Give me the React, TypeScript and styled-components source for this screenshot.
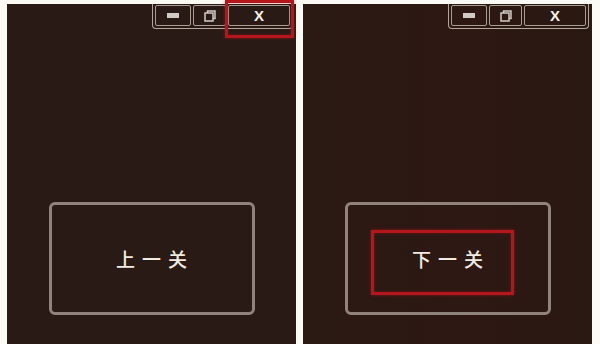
import React from "react";
import styled, { createGlobalStyle } from "styled-components";

const Global = createGlobalStyle`
  html, body { margin: 0; padding: 0; background: #fbfaf5; }
  body { font-family: "Noto Sans", "Noto Sans CJK SC", sans-serif; }
`;

const Page = styled.div`
  width: 600px;
  height: 344px;
  display: flex;
  gap: 7px;
  padding: 4px 8px 0 7px;
  box-sizing: border-box;
  overflow: hidden;
`;

const Panel = styled.div<{ $bg: string }>`
  position: relative;
  flex: 1;
  height: 340px;
  background: ${(p) => p.$bg};
  display: flex;
  flex-direction: column;
  align-items: center;
`;

const TitleRow = styled.div`
  align-self: stretch;
  display: flex;
  justify-content: flex-end;
  padding-right: 3px;
`;

const Frame = styled.div`
  position: relative;
  display: flex;
  gap: 2px;
  padding: 1px 2px 2px 2px;
  border: 1px solid #b3a79c;
  border-top: none;
  border-radius: 0 0 4px 4px;
  height: 21px;
`;

const WinBtn = styled.div<{ $w: number }>`
  width: ${(p) => p.$w}px;
  height: 19px;
  border: 1px solid #a89c92;
  border-radius: 2px;
  display: flex;
  align-items: center;
  justify-content: center;
  box-sizing: content-box;
`;

const MinBar = styled.div`
  width: 12px;
  height: 5px;
  background: #d2cbc5;
`;

const CloseX = styled.span`
  font-family: "Liberation Sans", Arial, sans-serif;
  font-weight: bold;
  font-size: 15px;
  color: #f4f0ea;
  line-height: 1;
`;

const Highlight = styled.div<{ $inset: string }>`
  position: absolute;
  inset: ${(p) => p.$inset};
  border: 3px solid #b3161b;
  box-shadow: 0 0 3px rgba(200, 20, 30, 0.6), inset 0 0 3px rgba(200, 20, 30, 0.5);
  pointer-events: none;
`;

const Spacer = styled.div`
  flex: 1;
`;

const BigButton = styled.div`
  position: relative;
  width: 200px;
  height: 107px;
  margin-bottom: 29px;
  border: 3px solid #8f837c;
  border-radius: 6px;
  display: flex;
  align-items: center;
  justify-content: center;
`;

const Label = styled.span`
  position: relative;
  font-family: "Noto Sans CJK SC", "Noto Sans", sans-serif;
  font-size: 19px;
  font-weight: 500;
  color: #f1ebe1;
  letter-spacing: 7px;
  margin-right: -7px;
`;

const RedBox = styled.div`
  position: absolute;
  left: 23px;
  top: 25px;
  width: 137px;
  height: 59px;
  border: 3px solid #b3161b;
  box-shadow: 0 0 3px rgba(200, 20, 30, 0.6), inset 0 0 3px rgba(200, 20, 30, 0.5);
`;

const RestoreIcon = () => (
  <svg width="12" height="12" viewBox="0 0 12 12" fill="none" stroke="#d2cbc5" strokeWidth="1.5">
    <rect x="1" y="3" width="8" height="8" />
    <path d="M3.5 3 V1 H11 V8.5 H9" />
  </svg>
);

const TitleBar: React.FC<{ highlight?: boolean }> = ({ highlight }) => (
  <TitleRow>
    <Frame>
      <WinBtn $w={34}>
        <MinBar />
      </WinBtn>
      <WinBtn $w={31}>
        <RestoreIcon />
      </WinBtn>
      <WinBtn $w={60}>
        <CloseX>X</CloseX>
      </WinBtn>
      {highlight && <Highlight $inset="-4px -2px -10px 72px" />}
    </Frame>
  </TitleRow>
);

export default function App() {
  return (
    <>
      <Global />
      <Page>
        <Panel $bg="#291a15">
          <TitleBar highlight />
          <Spacer />
          <BigButton>
            <Label>上一关</Label>
          </BigButton>
        </Panel>
        <Panel $bg="linear-gradient(90deg, #2b1913 0%, #2d1813 60%, #2a1812 100%)">
          <TitleBar />
          <Spacer />
          <BigButton>
            <RedBox />
            <Label>下一关</Label>
          </BigButton>
        </Panel>
      </Page>
    </>
  );
}
